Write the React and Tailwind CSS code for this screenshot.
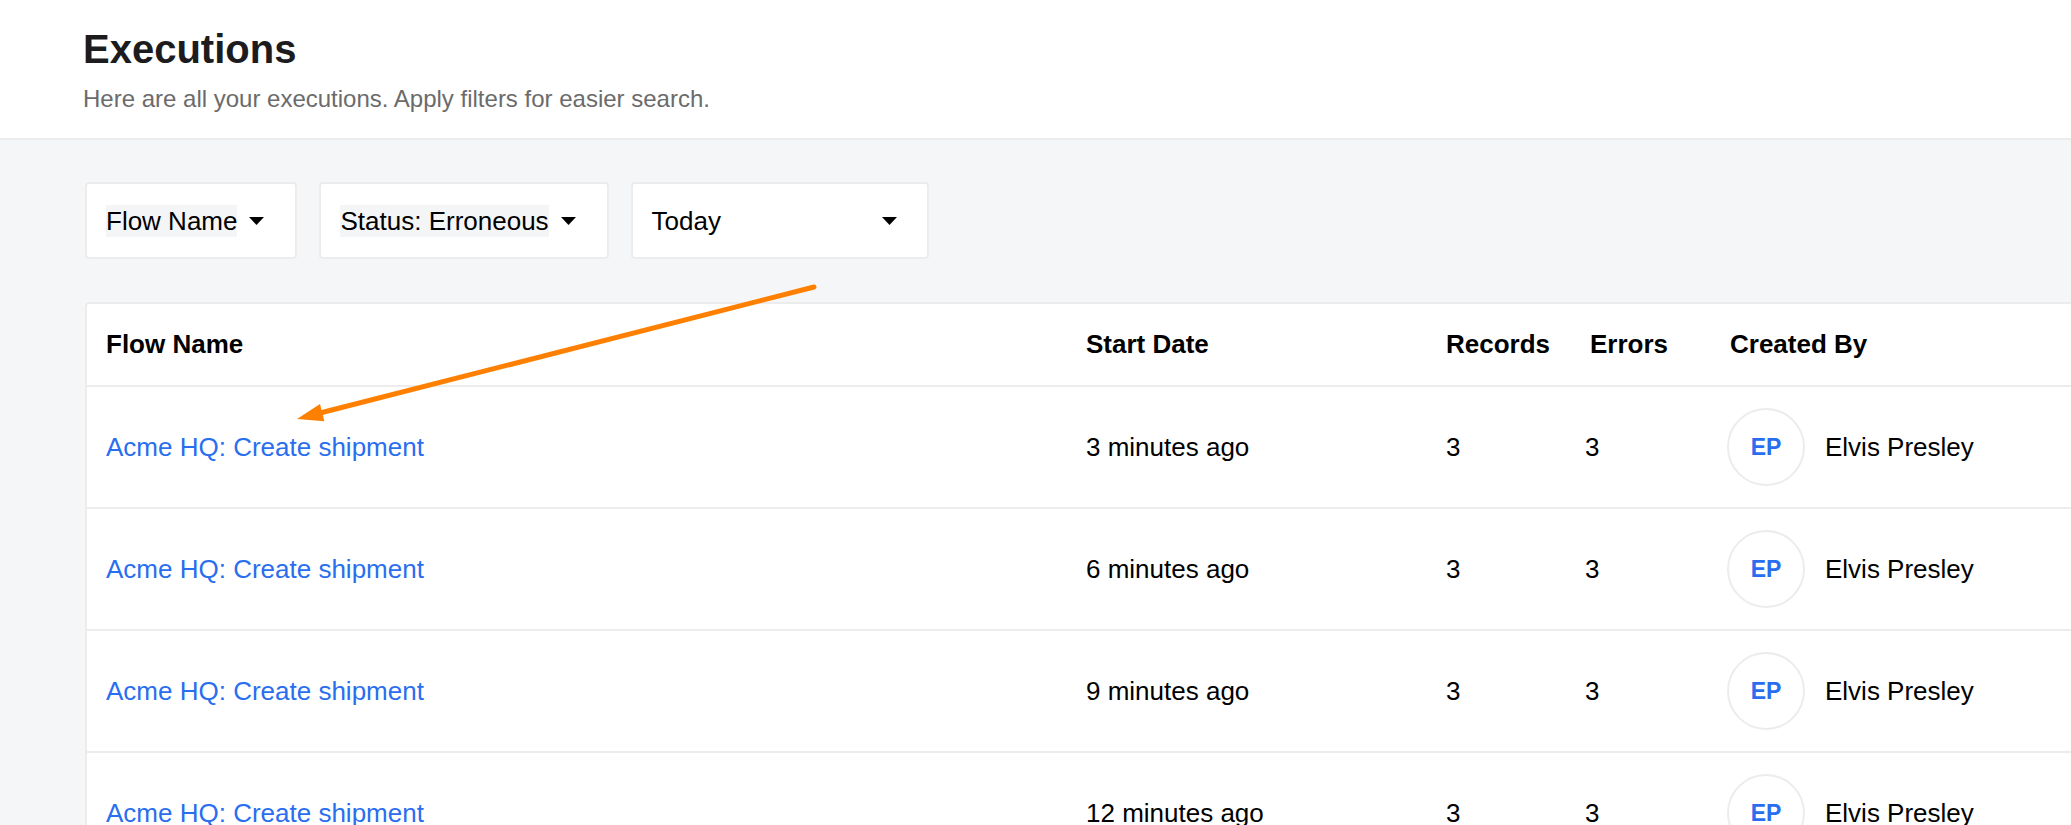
import React from 'react';

const rows = [
    { flow: 'Acme HQ: Create shipment', started: '3 minutes ago', records: 3, errors: 3, user: 'Elvis Presley', initials: 'EP' },
    { flow: 'Acme HQ: Create shipment', started: '6 minutes ago', records: 3, errors: 3, user: 'Elvis Presley', initials: 'EP' },
    { flow: 'Acme HQ: Create shipment', started: '9 minutes ago', records: 3, errors: 3, user: 'Elvis Presley', initials: 'EP' },
    { flow: 'Acme HQ: Create shipment', started: '12 minutes ago', records: 3, errors: 3, user: 'Elvis Presley', initials: 'EP' },
];

const Caret = () => (
    <svg width="15" height="8" viewBox="0 0 15 8" className="shrink-0">
        <polygon points="0,0 15,0 7.5,8" fill="#000" />
    </svg>
);

const Filter = ({ label, highlight = true, wide = false }) => (
    <div className={ `flex items-center bg-white border-2 border-[#ececec] rounded-[4px] pl-[19px] pt-[21px] pb-[20px] ${ wide ? 'w-[298px] justify-between pr-[30px]' : 'gap-[12px] pr-[31px]' }` }>
        <span className={ `text-[26px] leading-[32px] text-black ${ highlight ? 'bg-[#f4f5f7]' : '' }` }>{ label }</span>
        <Caret />
    </div>
);

const Avatar = ({ initials }) => (
    <div className="w-[78px] h-[78px] rounded-full border-2 border-[#ececec] flex items-center justify-center shrink-0">
        <span className="text-[23px] font-bold text-[#2a6ef0]">{ initials }</span>
    </div>
);

const App = () => {
    return (
        <div className="relative w-full h-[825px] overflow-hidden bg-[#f5f6f8] font-[Liberation_Sans,Arial,sans-serif]">
            <header className="bg-white border-b-2 border-[#ececec] pl-[83px] pt-[24px] pb-[23px]">
                <h1 className="text-[40px] leading-[50px] font-bold text-[#1c1c1e]">Executions</h1>
                <p className="mt-[9px] text-[24px] leading-[32px] text-[#6b6b6b]">Here are all your executions. Apply filters for easier search.</p>
            </header>

            <main className="pl-[85px] pt-[42px]">
                <div className="flex gap-[22px]">
                    <Filter label="Flow Name" />
                    <Filter label="Status: Erroneous" />
                    <Filter label="Today" highlight={ false } wide />
                </div>

                <div className="mt-[43px] w-[2100px] bg-white border-2 border-[#ececec] rounded-[4px]">
                    <div className="flex items-center pl-[19px] h-[83px] border-b-2 border-[#ececec] text-[26px] font-bold text-black">
                        <div className="w-[980px]">Flow Name</div>
                        <div className="w-[360px]">Start Date</div>
                        <div className="w-[139px]">Records</div>
                        <div className="w-[142px] pl-[5px]">Errors</div>
                        <div className="flex-1 pl-[3px]">Created By</div>
                    </div>
                    {
                        rows.map((row, index) => (
                            <div key={ index } className="flex items-center pl-[19px] h-[122px] border-b-2 border-[#ececec] text-[26px] text-black">
                                <div className="w-[980px]">
                                    <a href="#" className="text-[#2a6ef0]">{ row.flow }</a>
                                </div>
                                <div className="w-[360px]">{ row.started }</div>
                                <div className="w-[139px]">{ row.records }</div>
                                <div className="w-[142px]">{ row.errors }</div>
                                <div className="flex-1 flex items-center gap-[20px]">
                                    <Avatar initials={ row.initials } />
                                    <span>{ row.user }</span>
                                </div>
                            </div>
                        ))
                    }
                </div>
            </main>

            {/* annotation arrow drawn over the page */}
            <svg className="absolute left-0 top-0 pointer-events-none" width="2071" height="825">
                <line x1="814" y1="287" x2="320" y2="413" stroke="#ff8000" strokeWidth="5" strokeLinecap="round" />
                <polygon points="297,419 324.4,421.3 320,403.9" fill="#ff8000" />
            </svg>
        </div>
    );
}

export default App;
